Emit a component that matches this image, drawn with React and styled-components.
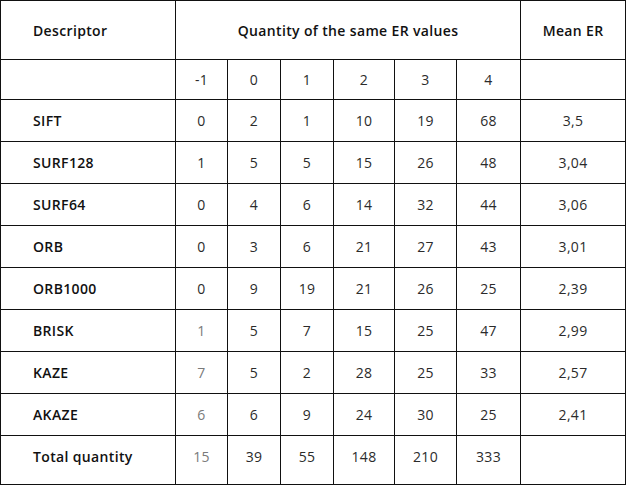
import React from "react";
import styled, { createGlobalStyle } from "styled-components";

const Global = createGlobalStyle`
  html, body { margin: 0; padding: 0; background: #fff; }
  body { font-family: "Open Sans", "Liberation Sans", sans-serif; }
`;

const Table = styled.table`
  border-collapse: collapse;
  table-layout: fixed;
  width: 626px;
  font-family: "Open Sans", "Liberation Sans", sans-serif;
  font-size: 14px;
  letter-spacing: 0.35px;
  color: #2b2b2b;
`;

const HeadCell = styled.th`
  border: 1px solid #111;
  font-weight: 600;
  color: #111;
  height: ${(p) => p.$h || 42}px;
  padding: 0;
  text-align: ${(p) => (p.$left ? "left" : "center")};
  padding-left: ${(p) => (p.$left ? "32px" : "0")};
`;

const NameCell = styled.td`
  border: 1px solid #111;
  font-weight: 600;
  color: #111;
  padding: 0 0 ${(p) => p.$pb || 0}px 32px;
  height: ${(p) => p.$h || 41}px;
`;

const ValueCell = styled.td`
  border: 1px solid #111;
  text-align: center;
  padding: 0 0 ${(p) => p.$pb || 0}px 0;
  font-weight: 400;
  color: ${(p) => (p.$muted ? "#7a7a7a" : "#2b2b2b")};
`;

const widths = [175, 52, 53, 53, 61, 62, 64, 105];

const rows = [
  ["SIFT", ["0", "2", "1", "10", "19", "68"], "3,5"],
  ["SURF128", ["1", "5", "5", "15", "26", "48"], "3,04"],
  ["SURF64", ["0", "4", "6", "14", "32", "44"], "3,06"],
  ["ORB", ["0", "3", "6", "21", "27", "43"], "3,01"],
  ["ORB1000", ["0", "9", "19", "21", "26", "25"], "2,39"],
  ["BRISK", ["1", "5", "7", "15", "25", "47"], "2,99", true],
  ["KAZE", ["7", "5", "2", "28", "25", "33"], "2,57", true],
  ["AKAZE", ["6", "6", "9", "24", "30", "25"], "2,41", true],
];

export default function App() {
  return (
    <>
      <Global />
      <Table>
        <colgroup>
          {widths.map((w, i) => (
            <col key={i} style={{ width: w }} />
          ))}
        </colgroup>
        <thead>
          <tr>
            <HeadCell $left $h={58}>Descriptor</HeadCell>
            <HeadCell colSpan={6}>Quantity of the same ER values</HeadCell>
            <HeadCell>Mean ER</HeadCell>
          </tr>
          <tr>
            <NameCell $h={39} />
            {["-1", "0", "1", "2", "3", "4"].map((v) => (
              <ValueCell key={v}>{v}</ValueCell>
            ))}
            <ValueCell />
          </tr>
        </thead>
        <tbody>
          {rows.map(([name, vals, mean, mutedFirst]) => (
            <tr key={name}>
              <NameCell>{name}</NameCell>
              {vals.map((v, i) => (
                <ValueCell key={i} $muted={mutedFirst && i === 0}>
                  {v}
                </ValueCell>
              ))}
              <ValueCell>{mean}</ValueCell>
            </tr>
          ))}
          <tr>
            <NameCell $h={40} $pb={8}>Total quantity</NameCell>
            {["15", "39", "55", "148", "210", "333"].map((v, i) => (
              <ValueCell key={i} $muted={i === 0} $pb={8}>
                {v}
              </ValueCell>
            ))}
            <ValueCell $pb={8} />
          </tr>
        </tbody>
      </Table>
    </>
  );
}
